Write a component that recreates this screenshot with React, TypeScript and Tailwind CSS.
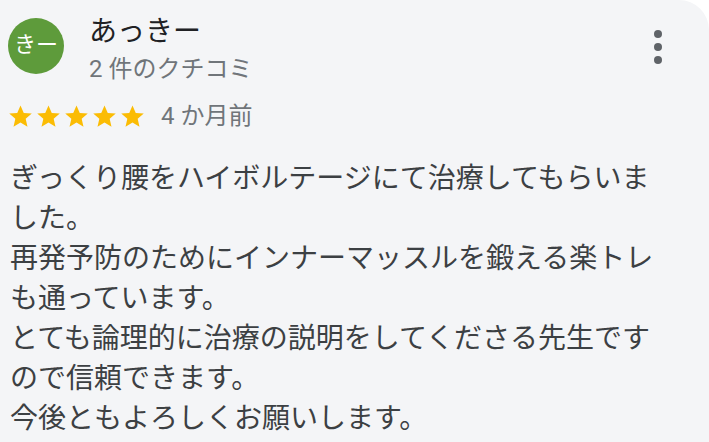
import React from "react";

const Star = () => (
  <svg width="27" height="27" viewBox="0 0 24 24" className="shrink-0">
    <path
      fill="#fbbc04"
      d="M12 2.2l2.9 6.6 7.1.6-5.4 4.7 1.6 7-6.2-3.7-6.2 3.7 1.6-7L2 9.4l7.1-.6z"
    />
  </svg>
);

export default function App() {
  const font = { fontFamily: "Roboto, 'Noto Sans CJK JP', sans-serif" };
  return (
    <div className="w-[709px] h-[442px] bg-white overflow-hidden" style={font}>
      <div className="w-full h-full bg-[#f4f5f7] rounded-tr-[30px] relative pl-[8px] pt-[18px]">
        <div className="flex items-start">
          <div className="w-[56px] h-[56px] rounded-full bg-[#5e9b3b] flex items-center justify-center text-white text-[22px] leading-none">
            <span className="-mt-[2px]">きー</span>
          </div>
          <div className="ml-[25px] -mt-[3px] flex flex-col">
            <div className="text-[28px] leading-[34px] text-[#202124]">あっきー</div>
            <div className="text-[24px] leading-[30px] text-[#70757a] mt-[5px]">2 件のクチコミ</div>
          </div>
        </div>
        <div className="absolute left-[654px] top-[30px] flex flex-col gap-[5px]">
          <span className="w-[8px] h-[8px] rounded-full bg-[#5f6368]" />
          <span className="w-[8px] h-[8px] rounded-full bg-[#5f6368]" />
          <span className="w-[8px] h-[8px] rounded-full bg-[#5f6368]" />
        </div>
        <div className="flex items-center mt-[17px] -ml-[1px]">
          <div className="flex gap-[1px]">
            <Star />
            <Star />
            <Star />
            <Star />
            <Star />
          </div>
          <span className="ml-[15px] text-[24px] leading-[30px] text-[#70757a]">4 か月前</span>
        </div>
        <div className="mt-[28px] pl-[2px] w-[662px] text-[28px] leading-[40px] text-[#3c4043]">
          ぎっくり腰をハイボルテージにて治療してもらいました。
          <br />
          再発予防のためにインナーマッスルを鍛える楽トレも通っています。
          <br />
          とても論理的に治療の説明をしてくださる先生ですので信頼できます。
          <br />
          今後ともよろしくお願いします。
        </div>
      </div>
    </div>
  );
}
